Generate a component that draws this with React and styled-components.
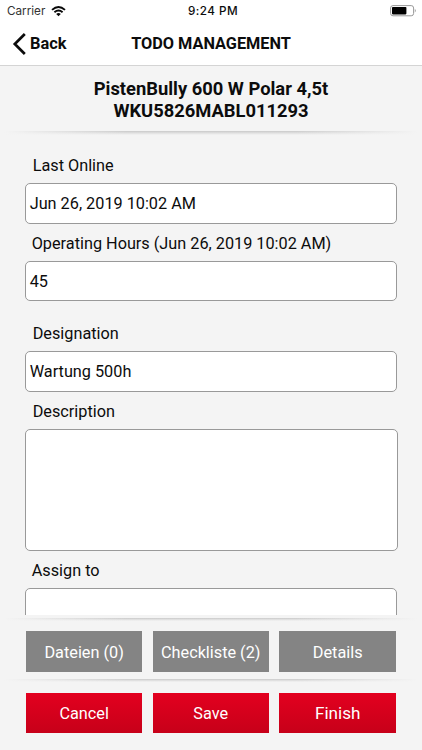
import React from "react";
import styled, { createGlobalStyle } from "styled-components";

const GlobalStyle = createGlobalStyle`
  * { box-sizing: border-box; }
  body { margin: 0; background: #f4f4f4; }
`;

const Screen = styled.div`
  width: 422px;
  height: 750px;
  display: flex;
  flex-direction: column;
  overflow: hidden;
  background: #f4f4f4;
  color: #0c0c0c;
  font-family: Roboto, sans-serif;
  font-size: 16.25px;
  white-space: nowrap;
`;

const StatusBar = styled.div`
  flex: none;
  height: 22px;
  padding: 0 5px 0 7px;
  display: grid;
  grid-template-columns: 1fr auto 1fr;
  align-items: center;
  background: #fff;
  font-family: Inter, sans-serif;
  font-size: 11.7px;
  line-height: 22px;
`;

const Carrier = styled.div`
  display: flex;
  align-items: center;
  gap: 6px;
  color: #333;
`;

const Clock = styled.div`
  padding-left: 2px;
  font-weight: 500;
  letter-spacing: 0.45px;
`;

const Battery = styled.svg`
  justify-self: end;
`;

const NavBar = styled.header`
  flex: none;
  height: 44px;
  padding: 0 12px;
  display: grid;
  grid-template-columns: 1fr auto 1fr;
  align-items: center;
  background: #fff;
  border-bottom: 1px solid #d4d4d4;
  font-weight: 700;
`;

const BackButton = styled.button`
  display: flex;
  align-items: center;
  gap: 4px;
  padding: 0;
  border: 0;
  background: none;
  color: inherit;
  font: inherit;
  font-size: 16.4px;
`;

const NavTitle = styled.h1`
  margin: 0;
  font-size: 16.3px;
  font-weight: 700;
`;

const Vehicle = styled.h2`
  flex: none;
  height: 65px;
  margin: 0;
  padding-top: 12px;
  text-align: center;
  font-size: 18.35px;
  font-weight: 700;
  line-height: 21.5px;
`;

const Divider = styled.div`
  flex: none;
  height: ${(p) => p.$height || 3}px;
  background: linear-gradient(90deg, #f4f4f4 1%, transparent 30%, transparent 70%, #f4f4f4 99%),
    linear-gradient(#c9c9c9, #e0e0e0 50%, #f4f4f4);
`;

const Form = styled.main`
  flex: none;
  height: 480px;
  padding: 13px 24.7px 0;
  overflow: hidden;
`;

const Label = styled.label`
  display: flex;
  align-items: center;
  height: 37px;
  padding-top: 1px;
  padding-left: ${(p) => p.$indent || 8}px;
`;

const FirstLabel = styled(Label)`
  height: 35px;
  padding-top: 0;
`;

const SectionLabel = styled(Label)`
  height: 36px;
  margin-top: 14px;
`;

const Field = styled.div`
  display: flex;
  align-items: center;
  width: 372.5px;
  height: ${(p) => p.$height || 41}px;
  padding-left: 4px;
  border: 1px solid #999;
  border-radius: 5px;
  background: #fff;
`;

const TextArea = styled(Field)`
  width: 373.5px;
  height: 122px;
`;

const Footer = styled.footer`
  padding-top: 3px;
`;

const ButtonRow = styled.div`
  display: grid;
  grid-template-columns: 116.3px 115.7px 117px;
  gap: 10.6px;
  height: 58px;
  padding: ${(p) => p.$top}px 0 0 26px;
`;

const Button = styled.button`
  height: 41px;
  padding: 2px 0 0;
  border: 0;
  color: #fff;
  font: inherit;
  background: #848484;
`;

const PrimaryButton = styled(Button)`
  height: 40px;
  padding: 0;
  font-size: ${(p) => (p.$large ? 17.1 : 16.25)}px;
  background: linear-gradient(#e3001f, #c70019);
`;

const WifiIcon = () => (
  <svg width="15" height="11" viewBox="0 0 15 11" fill="none" stroke="#080808" strokeWidth="1.9">
    <path d="M1 3.9Q7.5-1.7 14 3.9M3.4 6.3Q7.5 2.8 11.6 6.3" />
    <path d="M5.2 8Q7.5 6.2 9.8 8L7.5 10.3Z" fill="#080808" stroke="none" />
  </svg>
);

const BackIcon = () => (
  <svg width="14" height="22" viewBox="0 0 14 22" fill="none" stroke="#0c0c0c" strokeWidth="2.7">
    <path d="M12.8 1 2.8 11l10 10" />
  </svg>
);

const BatteryIcon = () => (
  <Battery width="27" height="12" viewBox="0 0 27 12">
    <rect x="0.6" y="0.6" width="23" height="10.2" rx="2.4" fill="none" stroke="#999" />
    <rect x="2" y="2" width="14.4" height="7.4" rx="0.8" fill="#000" />
    <path d="M24.8 4q2 1.7 0 3.4z" fill="#999" />
  </Battery>
);

export default function App() {
  return (
    <>
      <GlobalStyle />
      <Screen>
        <StatusBar>
          <Carrier>Carrier<WifiIcon /></Carrier>
          <Clock>9:24 PM</Clock>
          <BatteryIcon />
        </StatusBar>
        <NavBar>
          <BackButton><BackIcon />Back</BackButton>
          <NavTitle>TODO MANAGEMENT</NavTitle>
        </NavBar>
        <Vehicle>PistenBully 600 W Polar 4,5t<br />WKU5826MABL011293</Vehicle>
        <Divider $height={4} />
        <Form>
          <FirstLabel>Last Online</FirstLabel>
          <Field>Jun 26, 2019 10:02 AM</Field>
          <Label $indent={7}>Operating Hours (Jun 26, 2019 10:02 AM)</Label>
          <Field $height={40}>45</Field>
          <SectionLabel>Designation</SectionLabel>
          <Field>Wartung 500h</Field>
          <Label>Description</Label>
          <TextArea />
          <Label $indent={7}>Assign to</Label>
          <Field />
        </Form>
        <Footer>
          <Divider />
          <ButtonRow $top={10}>
            <Button>Dateien (0)</Button>
            <Button>Checkliste (2)</Button>
            <Button>Details</Button>
          </ButtonRow>
          <Divider />
          <ButtonRow $top={11}>
            <PrimaryButton>Cancel</PrimaryButton>
            <PrimaryButton>Save</PrimaryButton>
            <PrimaryButton $large>Finish</PrimaryButton>
          </ButtonRow>
        </Footer>
      </Screen>
    </>
  );
}
